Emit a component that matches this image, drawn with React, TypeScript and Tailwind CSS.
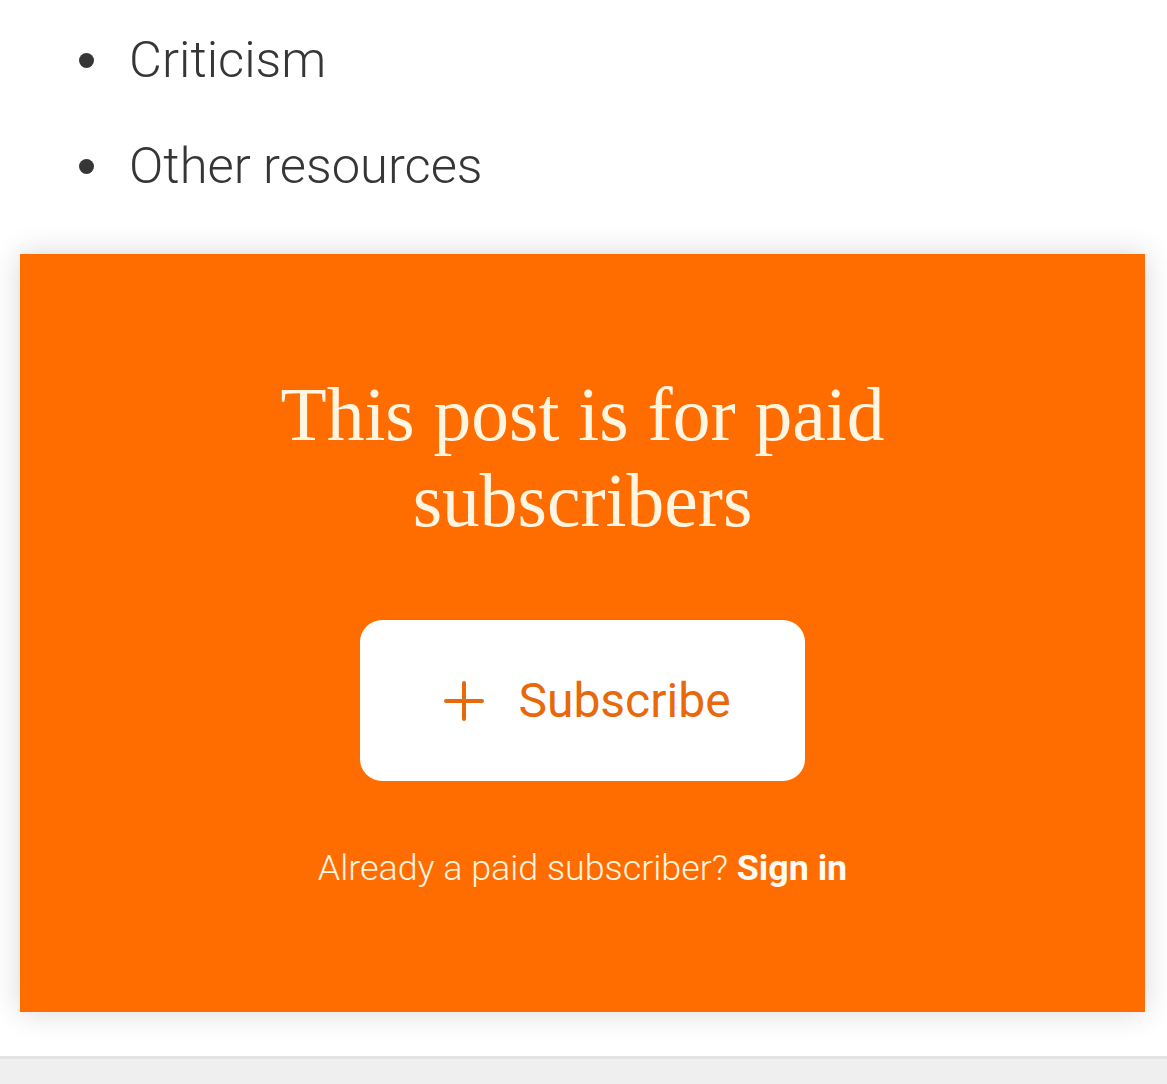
import React from 'react';

const items = ['Criticism', 'Other resources'];

export default function App() {
  return (
    <div className="w-[1167px] h-[1084px] bg-white flex flex-col overflow-hidden" style={{ fontFamily: 'Roboto, "Liberation Sans", sans-serif' }}>
      <ul className="pt-[30px] pl-[79px] flex flex-col gap-[46px]">
        {items.map((item) => (
          <li key={item} className="flex items-center h-[60px]">
            <span className="w-[15px] h-[15px] rounded-full bg-[#363636] shrink-0" />
            <span className="ml-[35px] text-[50.7px] leading-[60px] font-light text-[#363636]">{item}</span>
          </li>
        ))}
      </ul>

      <div className="mt-[58px] ml-[20px] w-[1125px] h-[758px] bg-[#ff6c00] shadow-[0_0_28px_rgba(0,0,0,0.16)] flex flex-col items-center pt-[118px]">
        <h2
          className="text-[75.5px] leading-[86px] text-[#fff5e1] text-center font-normal"
          style={{ fontFamily: '"Liberation Serif", "DejaVu Serif", serif' }}
        >
          This post is for paid
          <br />
          subscribers
        </h2>

        <button className="mt-[76px] w-[445px] h-[161px] rounded-[22px] bg-white flex items-center justify-center gap-[34px] pl-[10px]">
          <svg width="40" height="40" viewBox="0 0 40 40" fill="none" stroke="#e8680c" strokeWidth="4" strokeLinecap="round">
            <path d="M20 2v36M2 20h36" />
          </svg>
          <span className="text-[48px] leading-none text-[#e8680c]">Subscribe</span>
        </button>

        <p className="mt-[66px] text-[35.8px] leading-[42px] font-light text-[#fff5e1]">
          Already a paid subscriber? <span className="font-bold text-[#fffaf2]">Sign in</span>
        </p>
      </div>

      <div className="mt-[44px] flex-1 border-t-[3px] border-[#e3e3e3] bg-[#efefef]" />
    </div>
  );
}
